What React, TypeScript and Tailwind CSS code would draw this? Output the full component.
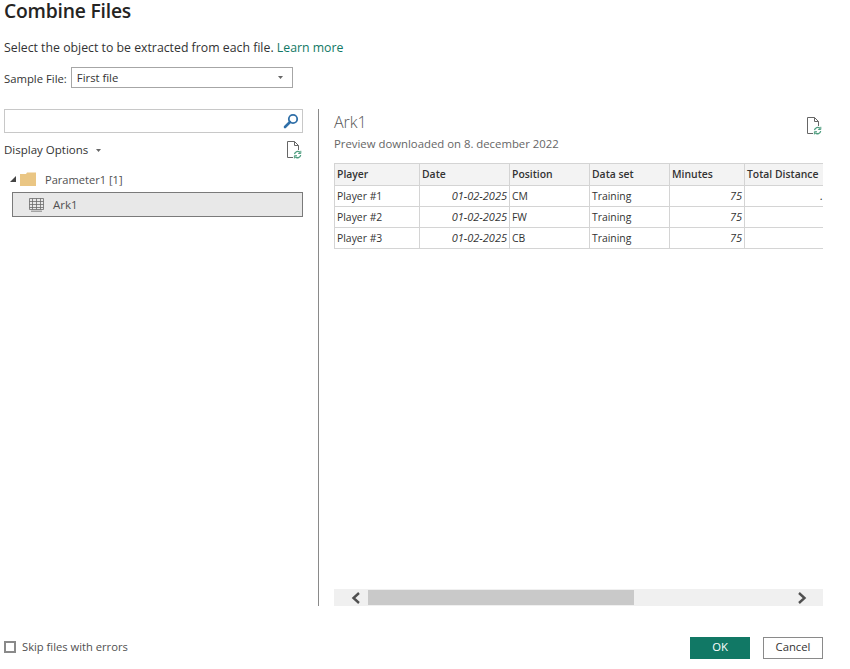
const font = { fontFamily: '"Open Sans", "Noto Sans", sans-serif' };

function DocRefresh() {
  return (
    <svg width="15" height="18" viewBox="0 0 15 18" fill="none">
      <path d="M0.5 0.5H7.5L11.5 4.5V9M7.5 0.5V4.5H11.5M6 16.5H0.5V0.5" stroke="#666666" />
      <path d="M7.5 13.2A3.2 3.2 0 0 1 13 11.5M13.7 14A3.2 3.2 0 0 1 8.2 15.7" stroke="#4f9d7f" strokeWidth="1.3" />
      <path d="M13.8 9.8V12.5H11.2M7.4 17.4V14.7H10" stroke="#4f9d7f" />
    </svg>
  );
}

function Caret() {
  return (
    <svg width="5" height="3" viewBox="0 0 5 3">
      <path d="M0 0H5L2.5 3Z" fill="#666666" />
    </svg>
  );
}

function Chevron({ right }: { right?: boolean }) {
  return (
    <svg width="10" height="12" viewBox="0 0 10 12" fill="none">
      <path d={right ? "M2 1L7.5 6L2 11" : "M8 1L2.5 6L8 11"} stroke="#505050" strokeWidth="2.4" />
    </svg>
  );
}

const headers = [
  { t: "Player", w: "w-[85px]" },
  { t: "Date", w: "w-[90px]" },
  { t: "Position", w: "w-[80px]" },
  { t: "Data set", w: "w-[80px]" },
  { t: "Minutes", w: "w-[75px]" },
  { t: "Total Distance", w: "w-[79px]" },
];

const rows = [
  ["Player #1", "CM", "."],
  ["Player #2", "FW", ""],
  ["Player #3", "CB", ""],
];

const cell = "border border-[#d4d4d4] pl-[2px] pr-[2px] h-[21px] py-0 text-[10.4px] text-[#333333] whitespace-nowrap overflow-hidden";

export default function App() {
  return (
    <div className="w-[850px] h-[669px] bg-white flex flex-col pl-[4px] pr-[27px] overflow-hidden" style={font}>
      <h1 className="h-[21px] text-[19.3px] leading-[21px] font-semibold text-[#252423] tracking-[-0.2px]">Combine Files</h1>
      <p className="mt-[18px] h-[18px] text-[12.3px] leading-[18px] text-[#333333]">
        Select the object to be extracted from each file. <span className="text-[#117865]">Learn more</span>
      </p>
      <div className="mt-[10px] h-[21px] flex items-center gap-[4px]">
        <span className="text-[11.3px] text-[#333333] pt-[3px]">Sample File:</span>
        <div className="w-[222px] h-[21px] border border-[#a6a6a6] flex items-center justify-between pl-[5px] pr-[9px]">
          <span className="text-[11.3px] text-[#333333] pt-[2px]">First file</span>
          <Caret />
        </div>
      </div>
      <div className="mt-[21px] h-[497px] flex">
        <div className="w-[299px] flex flex-col">
          <div className="h-[24px] border border-[#c8c8c8] flex items-center justify-end pr-[3px]">
            <svg width="16" height="16" viewBox="0 0 16 16" fill="none">
              <circle cx="10" cy="6" r="4.2" stroke="#2f6fa8" strokeWidth="1.8" />
              <path d="M7 9L2 14" stroke="#2f6fa8" strokeWidth="2.6" strokeLinecap="round" />
            </svg>
          </div>
          <div className="mt-[8px] h-[18px] flex items-center justify-between pr-[1px]">
            <div className="flex items-center gap-[8px]">
              <span className="text-[11.5px] text-[#333333]">Display Options</span>
              <Caret />
            </div>
            <DocRefresh />
          </div>
          <div className="mt-[8px] h-[24px] flex items-center pl-[6px]">
            <svg width="6" height="6" viewBox="0 0 6 6">
              <path d="M6 0V6H0Z" fill="#444444" />
            </svg>
            <svg className="ml-[4px]" width="16" height="14" viewBox="0 0 16 14">
              <path d="M0 2H6L7 0.5H16V14H0Z" fill="#eac684" />
            </svg>
            <span className="ml-[9px] pt-[2px] text-[11.1px] text-[#505050]">Parameter1 [1]</span>
          </div>
          <div className="mt-[1px] ml-[8px] h-[25px] bg-[#e8e8e8] border border-[#7a7a7a] flex items-center pl-[16px] gap-[9px]">
            <svg width="15" height="14" viewBox="0 0 15 14" fill="none" stroke="#6b6b6b" strokeWidth="0.8">
              <path d="M0.5 0.5H14.5V11.5H0.5ZM0.5 3.5H14.5M0.5 6.5H14.5M0.5 9.5H14.5M3.5 0.5V11.5M7.5 0.5V11.5M11.5 0.5V11.5M2 13.2H13" />
            </svg>
            <span className="text-[11.5px] text-[#505050]">Ark1</span>
          </div>
        </div>
        <div className="ml-[15px] w-[1px] bg-[#8a8a8a]" />
        <div className="ml-[15px] w-[489px] flex flex-col">
          <div className="h-[54px] flex justify-between pr-[1px]">
            <div className="flex flex-col">
              <span className="h-[26px] text-[16px] leading-[27px] font-light text-[#555555]">Ark1</span>
              <span className="text-[11.35px] leading-[17px] text-[#666666]">Preview downloaded on 8. december 2022</span>
            </div>
            <div className="mt-[8px]">
              <DocRefresh />
            </div>
          </div>
          <div className="flex-1 overflow-hidden">
            <table className="table-fixed border-collapse w-[489px]">
              <thead>
                <tr>
                  {headers.map((h) => (
                    <th key={h.t} className={`${cell} ${h.w} leading-[15px] bg-[#f3f3f3] text-left font-semibold h-[22px]`}>
                      {h.t}
                    </th>
                  ))}
                </tr>
              </thead>
              <tbody>
                {rows.map((r) => (
                  <tr key={r[0]}>
                    <td className={`${cell} leading-[16px]`}>{r[0]}</td>
                    <td className={`${cell} leading-[16px] text-right italic text-[11px]`}>01-02-2025</td>
                    <td className={`${cell} leading-[16px]`}>{r[1]}</td>
                    <td className={`${cell} leading-[16px]`}>Training</td>
                    <td className={`${cell} leading-[16px] text-right italic text-[11px]`}>75</td>
                    <td className={`${cell} leading-[16px] !pr-0 text-right italic text-[11px]`}>{r[2]}</td>
                  </tr>
                ))}
              </tbody>
            </table>
          </div>
          <div className="h-[17px] bg-[#f0f0f0] flex items-center">
            <div className="w-[34px] flex justify-center pl-[9px]">
              <Chevron />
            </div>
            <div className="w-[266px] h-[15px] bg-[#c9c9c9]" />
            <div className="flex-1 flex justify-end pr-[16px]">
              <Chevron right />
            </div>
          </div>
        </div>
      </div>
      <div className="mt-[30px] h-[23px] flex items-center">
        <div className="w-[12px] h-[12px] border-2 border-[#8a8a8a] -mt-[1px]" />
        <span className="ml-[6px] text-[11.2px] text-[#505050] -mt-[1px]">Skip files with errors</span>
        <div className="ml-auto w-[60px] h-[22px] bg-[#117865] flex items-center justify-center text-[11.3px] text-white">OK</div>
        <div className="ml-[13px] w-[60px] h-[22px] border border-[#8a8a8a] flex items-center justify-center text-[11.3px] text-[#333333]">Cancel</div>
      </div>
    </div>
  );
}
